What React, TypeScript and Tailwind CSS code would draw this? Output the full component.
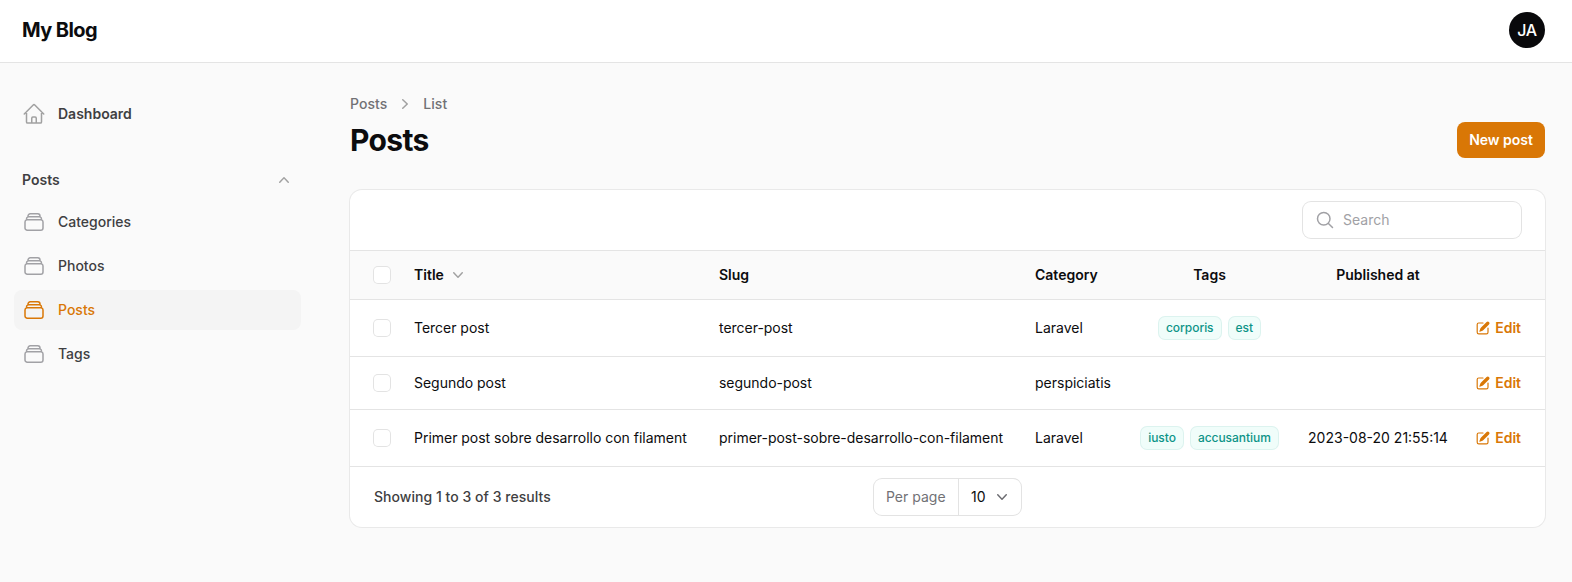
import React from "react";

const stroke = {
  fill: "none",
  stroke: "currentColor",
  strokeWidth: 1.5,
  strokeLinecap: "round",
  strokeLinejoin: "round",
} as const;

function HomeIcon() {
  return (
    <svg viewBox="0 0 24 24" className="size-6 shrink-0 text-[#a1a1a1]" {...stroke}>
      <path d="M2.25 12l8.954-8.955c.44-.439 1.152-.439 1.591 0L21.75 12M4.5 9.75v10.125c0 .621.504 1.125 1.125 1.125H9.75v-4.875c0-.621.504-1.125 1.125-1.125h2.25c.621 0 1.125.504 1.125 1.125V21h4.125c.621 0 1.125-.504 1.125-1.125V9.75M8.25 21h8.25" />
    </svg>
  );
}

function StackIcon({ className }: { className: string }) {
  return (
    <svg viewBox="0 0 24 24" className={className} {...stroke}>
      <path d="M6 6.878V6a2.25 2.25 0 012.25-2.25h7.5A2.25 2.25 0 0118 6v.878m-12 0c.235-.083.487-.128.75-.128h10.5c.263 0 .515.045.75.128m-12 0A2.25 2.25 0 004.5 9v.878m13.5-3A2.25 2.25 0 0119.5 9v.878m0 0a2.246 2.246 0 00-.75-.128H5.25c-.263 0-.515.045-.75.128m15 0A2.25 2.25 0 0121 12v6a2.25 2.25 0 01-2.25 2.25H5.25A2.25 2.25 0 013 18v-6c0-.98.626-1.813 1.5-2.122" />
    </svg>
  );
}

function EditIcon() {
  return (
    <svg viewBox="0 0 20 20" fill="currentColor" className="size-4">
      <path d="M5.433 13.917l1.262-3.155A4 4 0 017.58 9.42l6.92-6.918a2.121 2.121 0 013 3l-6.92 6.918c-.383.383-.84.685-1.343.886l-3.154 1.262a.5.5 0 01-.65-.65z" />
      <path d="M3.5 5.75c0-.69.56-1.25 1.25-1.25H10A.75.75 0 0010 3H4.75A2.75 2.75 0 002 5.75v9.5A2.75 2.75 0 004.75 18h9.5A2.75 2.75 0 0017 15.25V10a.75.75 0 00-1.5 0v5.25c0 .69-.56 1.25-1.25 1.25h-9.5c-.69 0-1.25-.56-1.25-1.25v-9.5z" />
    </svg>
  );
}

function ChevronDown({ className }: { className: string }) {
  return (
    <svg viewBox="0 0 20 20" fill="currentColor" className={className}>
      <path
        fillRule="evenodd"
        clipRule="evenodd"
        d="M5.23 7.21a.75.75 0 011.06.02L10 11.168l3.71-3.938a.75.75 0 111.08 1.04l-4.25 4.5a.75.75 0 01-1.08 0l-4.25-4.5a.75.75 0 01.02-1.06z"
      />
    </svg>
  );
}

function Checkbox() {
  return <span className="ml-6 block size-4 rounded bg-white ring-1 ring-[#e3e3e3]" />;
}

const navItems = ["Categories", "Photos", "Posts", "Tags"];

const rows = [
  { title: "Tercer post", slug: "tercer-post", category: "Laravel", tags: ["corporis", "est"], published: "", height: "h-[57px]" },
  { title: "Segundo post", slug: "segundo-post", category: "perspiciatis", tags: [], published: "", height: "h-[53px]" },
  {
    title: "Primer post sobre desarrollo con filament",
    slug: "primer-post-sobre-desarrollo-con-filament",
    category: "Laravel",
    tags: ["iusto", "accusantium"],
    published: "2023-08-20 21:55:14",
    height: "h-[57px]",
  },
];

function Sidebar() {
  return (
    <nav className="flex w-[301px] shrink-0 flex-col pt-[31px] pl-[14px] text-[#3f3f42]">
      <a className="flex h-10 items-center gap-3 px-2 font-semibold">
        <HomeIcon />
        Dashboard
      </a>
      <div className="mt-[28px] flex h-9 items-center justify-between pr-[7px] pl-2 font-semibold">
        Posts
        <ChevronDown className="size-5 rotate-180 text-[#a1a1a1]" />
      </div>
      <div className="mt-1 flex flex-col gap-1">
        {navItems.map((item) => {
          const active = item === "Posts";
          return (
            <a
              key={item}
              className={
                active
                  ? "flex h-10 items-center gap-3 rounded-lg bg-[#f4f4f4] px-2 font-medium text-[#d97706]"
                  : "flex h-10 items-center gap-3 px-2 font-medium"
              }
            >
              <StackIcon className={active ? "size-6 text-[#d97706]" : "size-6 text-[#a1a1a5]"} />
              {item}
            </a>
          );
        })}
      </div>
    </nav>
  );
}

function PostsTable() {
  return (
    <table className="w-full table-fixed border-collapse text-left text-[#0c0c0e]">
      <colgroup>
        <col className="w-[52px]" />
        <col className="w-[305px]" />
        <col className="w-[316px]" />
        <col className="w-[105px]" />
        <col className="w-[163px]" />
        <col className="w-[174px]" />
        <col className="w-[80px]" />
      </colgroup>
      <thead>
        <tr className="h-[49px] bg-[#fafafa] font-semibold shadow-[inset_0_-1px_0_#e4e4e4]">
          <th className="p-0 pb-0.5">
            <Checkbox />
          </th>
          <th className="px-3 pt-0 pb-0.5 font-semibold">
            <span className="flex items-center gap-1">
              Title
              <ChevronDown className="size-5 text-[#a1a1a1]" />
            </span>
          </th>
          <th className="px-3 pt-0 pb-0.5 font-semibold">Slug</th>
          <th className="px-3 pt-0 pb-0.5 font-semibold">Category</th>
          <th className="px-3 pt-0 pb-0.5 text-center font-semibold">Tags</th>
          <th className="px-3 pt-0 pb-0.5 text-center font-semibold whitespace-nowrap">Published at</th>
          <th />
        </tr>
      </thead>
      <tbody>
        {rows.map((row) => (
          <tr key={row.slug} className={`${row.height} whitespace-nowrap shadow-[inset_0_-1px_0_#e4e4e4]`}>
            <td className="p-0 pb-0.5">
              <Checkbox />
            </td>
            <td className="px-3 pt-0 pb-0.5 tracking-[-0.02px]">{row.title}</td>
            <td className="px-3 pt-0 pb-0.5 tracking-[-0.02px]">{row.slug}</td>
            <td className="px-3 pt-0 pb-0.5">{row.category}</td>
            <td className="p-0 pb-0.5">
              <div className="flex justify-center gap-2">
                {row.tags.map((tag) => (
                  <span
                    key={tag}
                    className="flex h-[22px] items-center rounded-md bg-[#f0fdfa] px-[7px] text-xs font-medium tracking-[-0.04px] text-[#0d9488] ring-1 ring-[#dcf3ef]"
                  >
                    {tag}
                  </span>
                ))}
              </div>
            </td>
            <td className="p-0 pb-0.5 text-center">{row.published}</td>
            <td className="p-0 pr-6 pb-0.5">
              <a className="flex items-center justify-end gap-1 font-semibold text-[#d97706]">
                <EditIcon />
                Edit
              </a>
            </td>
          </tr>
        ))}
      </tbody>
    </table>
  );
}

export default function App() {
  return (
    <div className="flex h-[582px] flex-col overflow-hidden bg-[#fafafa] font-['Inter',sans-serif] text-sm">
      <header className="flex h-[63px] shrink-0 items-center justify-between border-b border-[#e4e4e4] bg-white pr-[27px] pb-[2px] pl-[22px]">
        <span className="text-xl font-bold tracking-[-0.6px] text-[#0c0c0e]">My Blog</span>
        <span className="flex size-9 items-center justify-center rounded-full bg-[#09090b] text-base font-medium tracking-[-0.4px] text-white">JA</span>
      </header>
      <div className="flex min-h-0 flex-1">
        <Sidebar />
        <main className="mr-[27px] ml-[49px] flex min-w-0 flex-1 flex-col pt-[31px]">
          <div className="flex h-5 items-center gap-2 font-medium tracking-[0.04px] text-[#717175]">
            Posts
            <svg viewBox="0 0 20 20" fill="currentColor" className="size-5 text-[#a1a1a1]">
              <path
                fillRule="evenodd"
                clipRule="evenodd"
                d="M7.21 14.77a.75.75 0 01.02-1.06L11.168 10 7.23 6.29a.75.75 0 111.04-1.08l4.5 4.25a.75.75 0 010 1.08l-4.5 4.25a.75.75 0 01-1.06-.02z"
              />
            </svg>
            List
          </div>
          <div className="mt-2 flex h-9 items-center justify-between">
            <h1 className="text-3xl font-bold tracking-[-0.65px] text-[#0c0c0e]">Posts</h1>
            <button className="h-9 rounded-lg bg-[#d97706] px-3 font-semibold text-white">New post</button>
          </div>
          <section className="mt-8 overflow-clip rounded-xl bg-white ring-1 ring-[#e9e9e9]">
            <div className="flex h-[61px] items-center justify-end border-b border-[#e4e4e4] pr-6">
              <div className="flex h-9 w-[218px] items-center gap-2 rounded-lg px-3 text-[#a1a1a5] ring-1 ring-[#e3e3e3]">
                <svg viewBox="0 0 24 24" className="size-5" {...stroke} strokeWidth={1.8}>
                  <path d="M21 21l-5.197-5.197m0 0A7.5 7.5 0 105.196 5.196a7.5 7.5 0 0010.607 10.607z" />
                </svg>
                Search
              </div>
            </div>
            <PostsTable />
            <div className="grid h-[60px] grid-cols-3 items-center px-6">
              <span className="font-medium tracking-[0.04px] text-[#3f3f42]">Showing 1 to 3 of 3 results</span>
              <div className="flex h-9 w-[147px] items-center justify-self-center rounded-lg ring-1 ring-[#e3e3e3]">
                <span className="flex h-full w-[85px] items-center border-r border-[#e3e3e3] pl-3 text-[#717175]">Per page</span>
                <span className="flex flex-1 items-center justify-between pr-[9px] pl-3 text-[#0c0c0e]">
                  10
                  <ChevronDown className="size-5 text-[#6b6b70]" />
                </span>
              </div>
            </div>
          </section>
        </main>
      </div>
    </div>
  );
}
